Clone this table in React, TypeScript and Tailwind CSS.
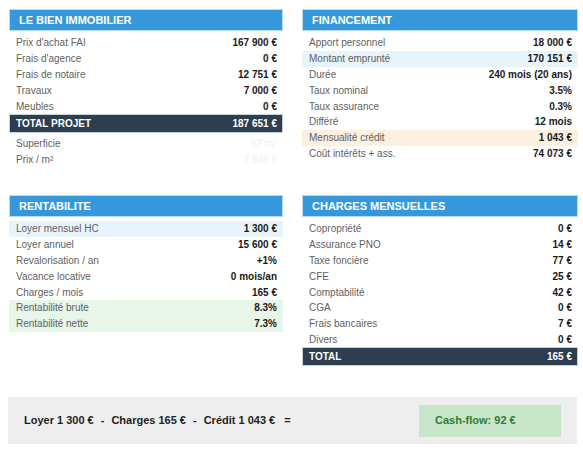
import React from 'react';

type Row = {
  label: string;
  value: string;
  tone?: 'blue' | 'orange' | 'green' | 'faint';
};

const toneBg: Record<string, string> = {
  blue: 'bg-[#e8f4fc]',
  orange: 'bg-[#fdf0e1]',
  green: 'bg-[#e8f5e9]',
};

const Panel: React.FC<{ title: string; rows: Row[]; total?: Row; after?: Row[] }> = ({
  title,
  rows,
  total,
  after,
}) => {
  const renderRow = (r: Row, i: number) => (
    <div
      key={r.label + i}
      className={`flex h-[15.8px] items-center justify-between pl-[7px] pr-[6px] ${r.tone && r.tone !== 'faint' ? toneBg[r.tone] : ''}`}
    >
      <span className="text-[10px] text-[#5f5f5f]">{r.label}</span>
      <span className={`text-[10px] font-bold ${r.tone === 'faint' ? 'text-[#f4f4f4]' : 'text-[#1a1a1a]'}`}>
        {r.value}
      </span>
    </div>
  );

  return (
    <div className="flex flex-col">
      <div className="flex h-[22px] items-center border border-[#b9dcf4] bg-[#3498db] pl-[9px] text-[11px] font-bold text-white">
        {title}
      </div>
      <div className="mt-[4px] flex flex-col">{rows.map(renderRow)}</div>
      {total && (
        <div className="flex h-[19px] items-center justify-between border border-[#c9d1d9] bg-[#2c3e50] pl-[6px] pr-[5px] text-[10px] font-bold text-white">
          <span>{total.label}</span>
          <span>{total.value}</span>
        </div>
      )}
      {after && <div className="mt-[3px] flex flex-col">{after.map(renderRow)}</div>}
    </div>
  );
};

export default function App() {
  return (
    <div className="h-[450px] w-[583px] bg-white font-['Liberation_Sans',Arial,sans-serif]">
      <div className="grid grid-cols-[274px_276px] grid-rows-[186px_202px] gap-x-[19px] pl-[9px] pt-[9px]">
        <Panel
          title="LE BIEN IMMOBILIER"
          rows={[
            { label: "Prix d'achat FAI", value: '167 900 €' },
            { label: "Frais d'agence", value: '0 €' },
            { label: 'Frais de notaire', value: '12 751 €' },
            { label: 'Travaux', value: '7 000 €' },
            { label: 'Meubles', value: '0 €' },
          ]}
          total={{ label: 'TOTAL PROJET', value: '187 651 €' }}
          after={[
            { label: 'Superficie', value: '57 m²', tone: 'faint' },
            { label: 'Prix / m²', value: '2 946 €', tone: 'faint' },
          ]}
        />
        <Panel
          title="FINANCEMENT"
          rows={[
            { label: 'Apport personnel', value: '18 000 €' },
            { label: 'Montant emprunté', value: '170 151 €', tone: 'blue' },
            { label: 'Durée', value: '240 mois (20 ans)' },
            { label: 'Taux nominal', value: '3.5%' },
            { label: 'Taux assurance', value: '0.3%' },
            { label: 'Différé', value: '12 mois' },
            { label: 'Mensualité crédit', value: '1 043 €', tone: 'orange' },
            { label: 'Coût intérêts + ass.', value: '74 073 €' },
          ]}
        />
        <Panel
          title="RENTABILITE"
          rows={[
            { label: 'Loyer mensuel HC', value: '1 300 €', tone: 'blue' },
            { label: 'Loyer annuel', value: '15 600 €' },
            { label: 'Revalorisation / an', value: '+1%' },
            { label: 'Vacance locative', value: '0 mois/an' },
            { label: 'Charges / mois', value: '165 €' },
            { label: 'Rentabilité brute', value: '8.3%', tone: 'green' },
            { label: 'Rentabilité nette', value: '7.3%', tone: 'green' },
          ]}
        />
        <Panel
          title="CHARGES MENSUELLES"
          rows={[
            { label: 'Copropriété', value: '0 €' },
            { label: 'Assurance PNO', value: '14 €' },
            { label: 'Taxe foncière', value: '77 €' },
            { label: 'CFE', value: '25 €' },
            { label: 'Comptabilité', value: '42 €' },
            { label: 'CGA', value: '0 €' },
            { label: 'Frais bancaires', value: '7 €' },
            { label: 'Divers', value: '0 €' },
          ]}
          total={{ label: 'TOTAL', value: '165 €' }}
        />
      </div>

      <div className="ml-[8px] flex h-[47px] w-[569px] items-center justify-between bg-[#eeeeee] pl-[16px] pr-[16px]">
        <div className="text-[11px] font-bold text-[#1f1f1f]">
          Loyer 1 300 €<span className="mx-[7px]">-</span>Charges 165 €<span className="mx-[7px]">-</span>Crédit 1 043 €
          <span className="ml-[9px]">=</span>
        </div>
        <div className="flex h-[32px] w-[142px] items-center bg-[#c8e6c9] pl-[16px] text-[11px] font-bold text-[#2e7d32]">
          Cash-flow: 92 €
        </div>
      </div>
    </div>
  );
}
